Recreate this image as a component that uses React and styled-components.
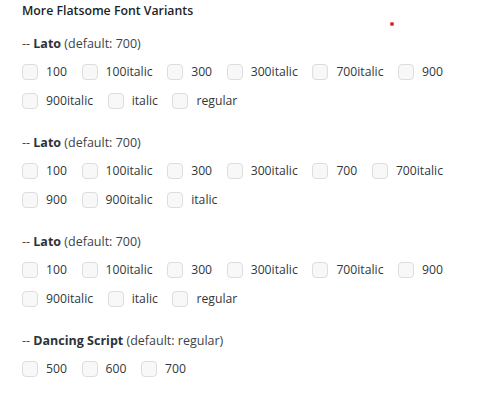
import React from "react";
import styled, { createGlobalStyle } from "styled-components";

const sections = [
  {
    name: "Lato",
    def: "700",
    variants: ["100", "100italic", "300", "300italic", "700italic", "900", "900italic", "italic", "regular"],
  },
  {
    name: "Lato",
    def: "700",
    variants: ["100", "100italic", "300", "300italic", "700", "700italic", "900", "900italic", "italic"],
  },
  {
    name: "Lato",
    def: "700",
    variants: ["100", "100italic", "300", "300italic", "700italic", "900", "900italic", "italic", "regular"],
  },
  {
    name: "Dancing Script",
    def: "regular",
    variants: ["500", "600", "700"],
  },
];

const App = () => {
  return (
    <>
      <GlobalStyle />
      <Wrapper>
        <Title>More Flatsome Font Variants</Title>
        {sections.map((section, index) => (
          <Section key={index}>
            <Heading>
              -- <strong>{section.name}</strong> (default: {section.def})
            </Heading>
            <Options>
              {section.variants.map((v) => (
                <Option key={v}>
                  <Box type="checkbox" />
                  <span>{v}</span>
                </Option>
              ))}
            </Options>
          </Section>
        ))}
        <Dot />
      </Wrapper>
    </>
  );
};

export default App;

const GlobalStyle = createGlobalStyle`
  body {
    margin: 0;
    background: #fff;
    font-family: "Open Sans", "Noto Sans", sans-serif;
  }
`;

const Wrapper = styled.div`
  position: relative;
  width: 460px;
  padding: 0 14px 0 22px;
  color: #3c434a;
  font-size: 12.5px;
`;

const Title = styled.div`
  font-weight: 600;
  font-size: 12.3px;
  line-height: 22px;
  color: #1d2327;
  margin-bottom: 12px;
`;

const Section = styled.div`
  margin-bottom: 18px;
`;

const Heading = styled.div`
  line-height: 20px;
  margin-bottom: 3px;
  strong {
    font-weight: 700;
    color: #2c3338;
  }
`;

const Options = styled.div`
  display: flex;
  flex-wrap: wrap;
`;

const Option = styled.label`
  display: inline-flex;
  align-items: center;
  height: 29px;
  margin-right: 14.6px;
  font-size: 12.2px;
  color: #32373c;
`;

const Box = styled.input`
  appearance: none;
  margin: 0 8px 0 0;
  width: 16px;
  height: 16px;
  box-sizing: border-box;
  border: 1px solid #dddddd;
  border-radius: 4px;
  background: #f8f8f8;
`;

const Dot = styled.span`
  position: absolute;
  left: 390px;
  top: 22px;
  width: 4px;
  height: 4px;
  border-radius: 50%;
  background: #e3262b;
`;
